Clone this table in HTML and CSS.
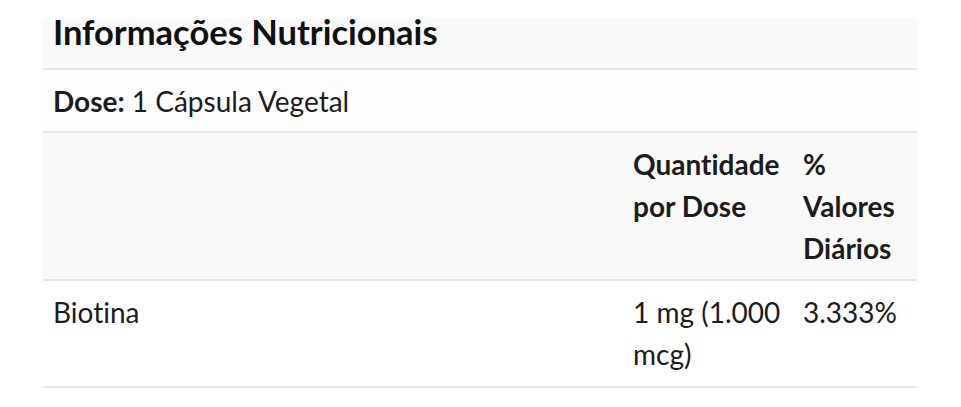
FILE: index.html
```html
<!DOCTYPE html>
<html lang="pt">
<head>
<meta charset="utf-8">
<title>Informações Nutricionais</title>
<link rel="stylesheet" href="styles.css">
</head>
<body>
<div class="wrap">
  <table class="nutri">
    <colgroup>
      <col class="c-name">
      <col class="c-qty">
      <col class="c-dv">
    </colgroup>
    <thead>
      <tr class="title-row"><th colspan="3" class="title">Informações Nutricionais</th></tr>
      <tr class="dose-row"><td colspan="3"><strong>Dose:</strong> 1 Cápsula Vegetal</td></tr>
      <tr class="head-row">
        <th></th>
        <th>Quantidade por Dose</th>
        <th>% Valores Diários</th>
      </tr>
    </thead>
    <tbody>
      <tr class="body-row">
        <td>Biotina</td>
        <td>1 mg (1.000 mcg)</td>
        <td>3.333%</td>
      </tr>
    </tbody>
  </table>
</div>
</body>
</html>
```

FILE: styles.css
```css
html, body {
  margin: 0;
  padding: 0;
  background: #ffffff;
}
body {
  font-family: Lato, "Open Sans", sans-serif;
  color: #1c1c1c;
  font-variant-ligatures: none;
  font-feature-settings: "liga" 0, "clig" 0;
}
.wrap {
  padding: 18px 44px 0 43px;
}
.nutri {
  width: 874px;
  border-collapse: collapse;
  table-layout: fixed;
  font-size: 28px;
  line-height: 42px;
}
.c-name { width: 580px; }
.c-qty { width: 170px; }
.c-dv { width: 124px; }
.nutri th,
.nutri td {
  padding: 10px;
  text-align: left;
  vertical-align: top;
  border-bottom: 2px solid #e6e6e6;
}
.nutri th { font-weight: 700; }
.title-row th.title {
  background: #f9f9f9;
  font-size: 34.5px;
  line-height: 27px;
  padding: 0 10px 23px 10px;
  color: #111;
}
.dose-row td {
  background: #fdfdfd;
  padding-bottom: 9px;
}
.dose-row strong { font-weight: 700; }
.head-row th {
  background: #f9f9f9;
}
.body-row td {
  background: #ffffff;
  padding-bottom: 11px;
}
```
